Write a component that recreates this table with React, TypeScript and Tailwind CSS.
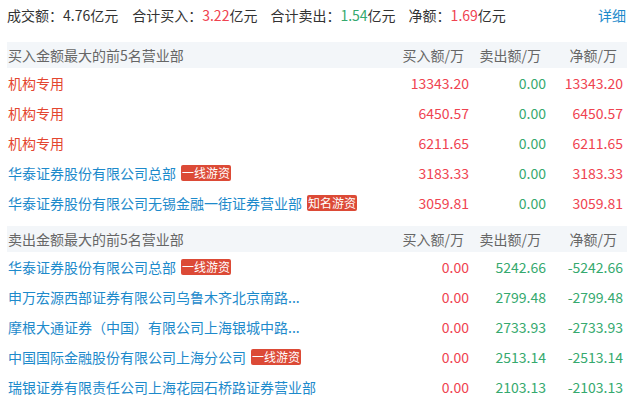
const RED = 'text-[#ef4350]';
const GREEN = 'text-[#35a96e]';

type Row = { name: string; tag?: string; buy: string; sell: string; net: string; inst?: boolean };

const buyRows: Row[] = [
  { name: '机构专用', buy: '13343.20', sell: '0.00', net: '13343.20', inst: true },
  { name: '机构专用', buy: '6450.57', sell: '0.00', net: '6450.57', inst: true },
  { name: '机构专用', buy: '6211.65', sell: '0.00', net: '6211.65', inst: true },
  { name: '华泰证券股份有限公司总部', tag: '一线游资', buy: '3183.33', sell: '0.00', net: '3183.33' },
  { name: '华泰证券股份有限公司无锡金融一街证券营业部', tag: '知名游资', buy: '3059.81', sell: '0.00', net: '3059.81' },
];

const sellRows: Row[] = [
  { name: '华泰证券股份有限公司总部', tag: '一线游资', buy: '0.00', sell: '5242.66', net: '-5242.66' },
  { name: '申万宏源西部证券有限公司乌鲁木齐北京南路...', buy: '0.00', sell: '2799.48', net: '-2799.48' },
  { name: '摩根大通证券（中国）有限公司上海银城中路...', buy: '0.00', sell: '2733.93', net: '-2733.93' },
  { name: '中国国际金融股份有限公司上海分公司', tag: '一线游资', buy: '0.00', sell: '2513.14', net: '-2513.14' },
  { name: '瑞银证券有限责任公司上海花园石桥路证券营业部', buy: '0.00', sell: '2103.13', net: '-2103.13' },
];

function Section({ title, rows, buyer }: { title: string; rows: Row[]; buyer: boolean }) {
  return (
    <div>
      <div className="flex h-[26px] items-center bg-[#f3f6f9] pr-[4px] text-[#666]">
        <div className="flex-1 pl-[1px]">{title}</div>
        <div className="w-[77px] pr-[5px] text-right">买入额/万</div>
        <div className="w-[77px] pr-[5px] text-right">卖出额/万</div>
        <div className="w-[77px] pr-[6px] text-right">净额/万</div>
      </div>
      {rows.map((r, i) => (
        <div key={i} className="flex h-[30px] items-center pr-[4px]">
          <div className="flex flex-1 items-center gap-[5px] pl-[1px]">
            <span className={r.inst ? 'text-[#e4462f]' : 'text-[#1d8acb]'}>{r.name}</span>
            {r.tag && (
              <span className="rounded-[2px] bg-[#dc4a36] px-[1px] text-[12px] leading-[16px] text-white">{r.tag}</span>
            )}
          </div>
          <div className={`w-[77px] text-right ${RED}`}>{r.buy}</div>
          <div className={`w-[77px] text-right ${GREEN}`}>{r.sell}</div>
          <div className={`w-[77px] text-right ${buyer ? RED : GREEN}`}>{r.net}</div>
        </div>
      ))}
    </div>
  );
}

export default function App() {
  return (
    <div
      className="w-[641px] h-[404px] overflow-hidden bg-white text-[14px] leading-[20px]"
      style={{ fontFamily: '"Noto Sans CJK SC", "Noto Sans", sans-serif' }}
    >
      <div className="ml-[7px] w-[620px]">
        <div className="flex h-[30px] items-center text-[#333]">
          <span>成交额：4.76亿元</span>
          <span className="ml-[14px]">
            合计买入：<span className={RED}>3.22</span>亿元
          </span>
          <span className="ml-[13px]">
            合计卖出：<span className={GREEN}>1.54</span>亿元
          </span>
          <span className="ml-[13px]">
            净额：<span className={RED}>1.69</span>亿元
          </span>
          <span className="ml-auto pr-[1px] text-[#1d8acb]">详细</span>
        </div>
        <div className="mt-[12px]">
          <Section title="买入金额最大的前5名营业部" rows={buyRows} buyer />
        </div>
        <div className="mt-[8px]">
          <Section title="卖出金额最大的前5名营业部" rows={sellRows} buyer={false} />
        </div>
      </div>
    </div>
  );
}
